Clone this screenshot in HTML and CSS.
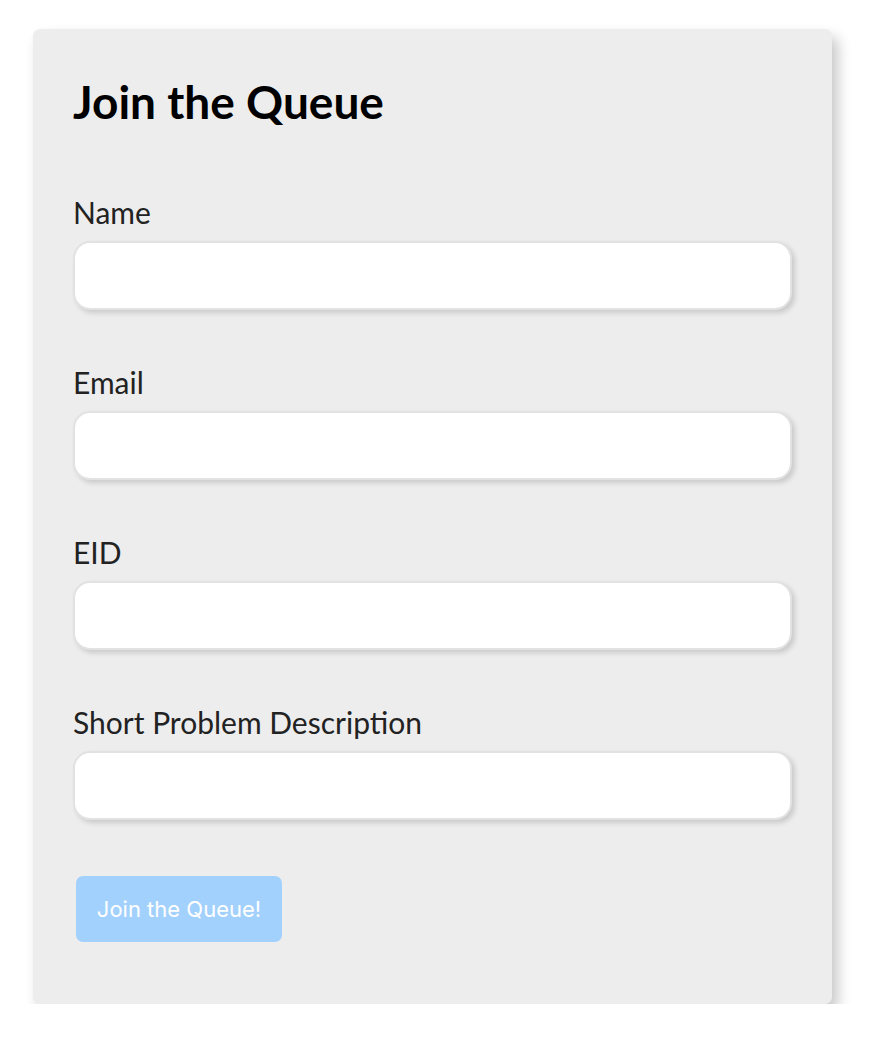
FILE: index.html
```html
<!DOCTYPE html>
<html>
<head>
<meta charset="utf-8">
<link rel="stylesheet" href="styles.css">
</head>
<body>
<div class="page">
  <form class="card">
    <h1 class="title">Join the Queue</h1>
    <div class="field">
      <label class="label">Name</label>
      <input class="input" type="text">
    </div>
    <div class="field">
      <label class="label">Email</label>
      <input class="input" type="text">
    </div>
    <div class="field">
      <label class="label">EID</label>
      <input class="input" type="text">
    </div>
    <div class="field">
      <label class="label">Short Problem Description</label>
      <input class="input" type="text">
    </div>
    <button class="btn" type="button">Join the Queue!</button>
  </form>
</div>
</body>
</html>
```
FILE: styles.css
```css
html, body {
  margin: 0;
  padding: 0;
  background: #ffffff;
}
.page {
  padding: 29px 0 0 33px;
}
.card {
  box-sizing: border-box;
  width: 799px;
  height: 975px;
  background: #ededed;
  border-radius: 7px;
  box-shadow: 6px 8px 14px rgba(0,0,0,0.22);
  padding: 40px 40px 0 40px;
  font-family: "Lato", "Open Sans", sans-serif;
  display: flex;
  flex-direction: column;
}
.title {
  margin: 0 0 61px 0;
  font-size: 46px;
  line-height: 66px;
  font-weight: 700;
  color: #000;
}
.field {
  display: flex;
  flex-direction: column;
  margin-bottom: 56px;
}
.label {
  font-size: 30px;
  line-height: 32px;
  color: #222;
  margin-bottom: 13px;
}
.input {
  box-sizing: border-box;
  width: 719px;
  height: 69px;
  border: 2px solid #e2e2e2;
  border-radius: 17px;
  background: #fff;
  box-shadow: 3px 3px 5px rgba(0,0,0,0.15);
  margin: 0;
  outline: none;
}
.btn {
  align-self: flex-start;
  margin: 0 0 0 3px;
  width: 206px;
  height: 66px;
  border: none;
  border-radius: 7px;
  background: #a3d1fd;
  color: #fff;
  font-family: "Inter", "Liberation Sans", sans-serif;
  font-size: 22px;
}
```
